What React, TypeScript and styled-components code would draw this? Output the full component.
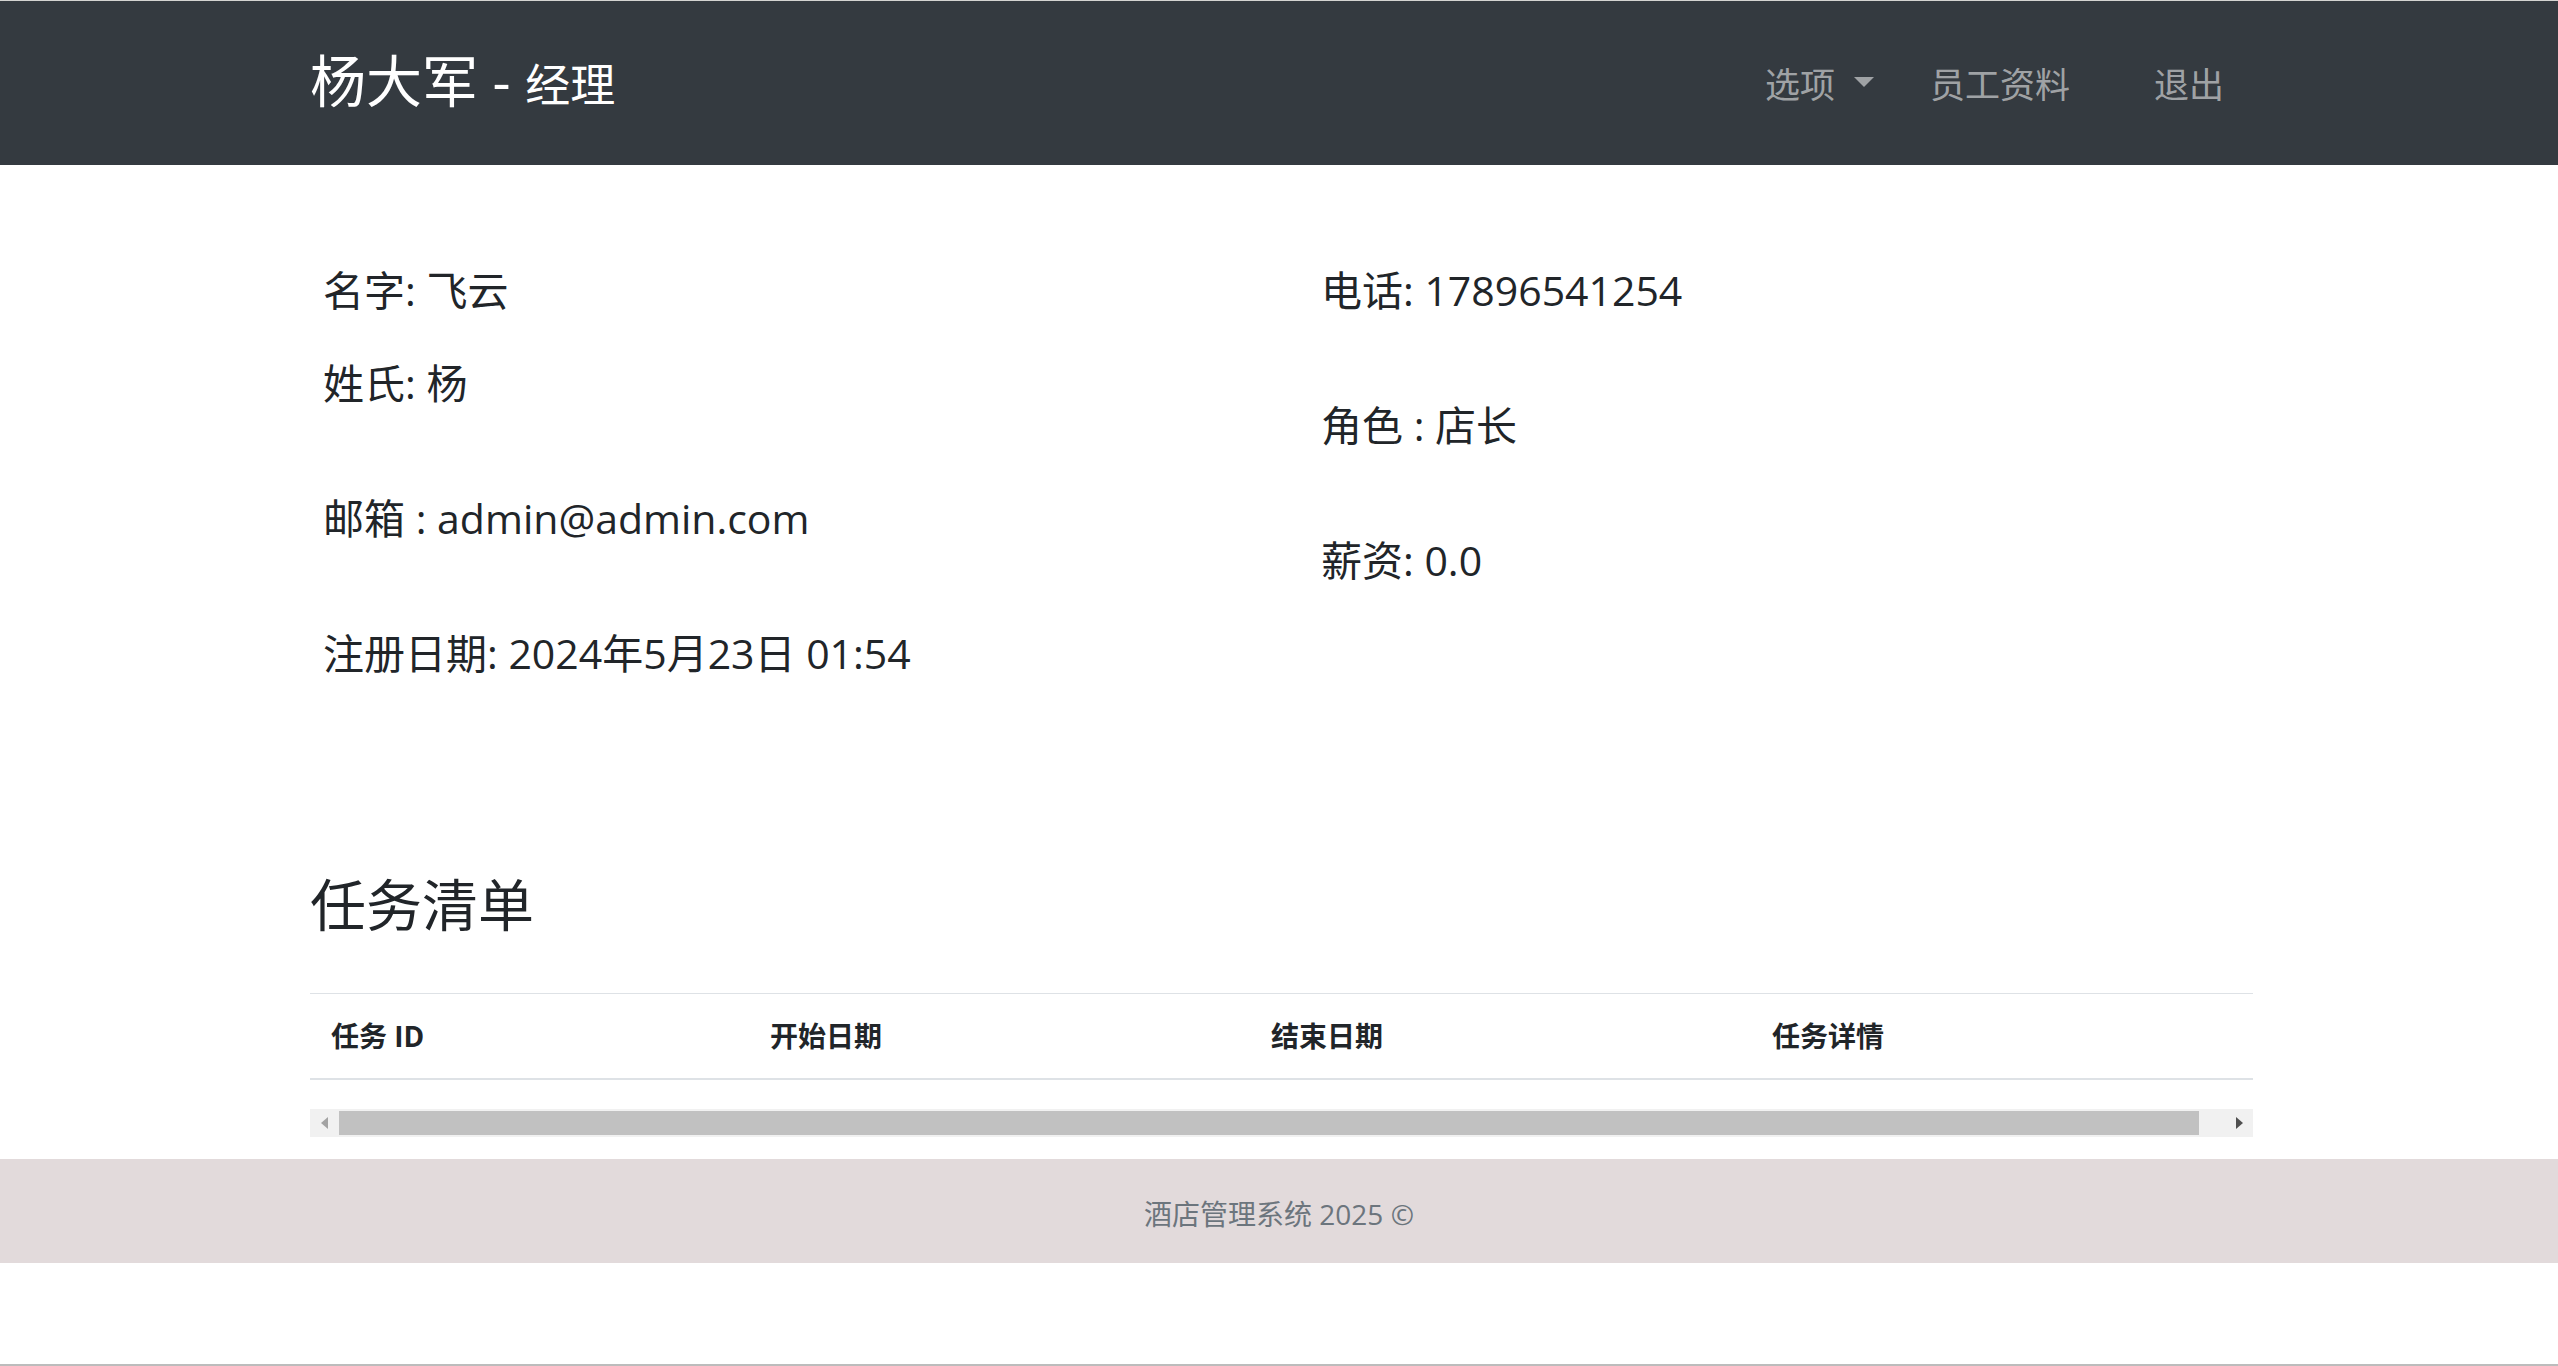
import React from "react";
import styled, { createGlobalStyle } from "styled-components";

const GlobalStyle = createGlobalStyle`
  html, body {
    margin: 0;
    padding: 0;
    background: #ffffff;
  }
  body {
    font-family: "Open Sans", "Noto Sans CJK SC", "Noto Sans", sans-serif;
    color: #212529;
  }
  * { box-sizing: border-box; }
`;

const Page = styled.div`
  display: flex;
  flex-direction: column;
  height: 1366px;
  border-bottom: 2px solid #bcbcbc;
  overflow: hidden;
`;

const Navbar = styled.nav`
  height: 165px;
  background: #343a40;
  border-top: 1px solid #d4d4d2;
  flex-shrink: 0;
`;

const NavInner = styled.div`
  width: 1943px;
  margin-left: 310px;
  height: 100%;
  display: flex;
  align-items: center;
  justify-content: space-between;
`;

const Brand = styled.a`
  display: flex;
  align-items: baseline;
  color: #ffffff;
  text-decoration: none;
  font-size: 56px;
  line-height: 1.2;
  margin-top: -4px;
  white-space: pre;
`;

const BrandSub = styled.span`
  font-size: 45px;
`;

const NavList = styled.ul`
  display: flex;
  align-items: center;
  list-style: none;
  margin: 0;
  padding: 0 29px 0 0;
  margin-top: 4px;
`;

const NavItem = styled.li<{ $ml?: number }>`
  margin-left: ${(p) => p.$ml ?? 0}px;
`;

const NavLink = styled.a`
  display: flex;
  align-items: center;
  color: rgba(255, 255, 255, 0.55);
  font-size: 35px;
  line-height: 1.5;
  text-decoration: none;
`;

const Caret = styled.span`
  display: inline-block;
  margin-left: 19px;
  width: 0;
  height: 0;
  border-left: 10px solid transparent;
  border-right: 10px solid transparent;
  border-top: 10px solid #9fa2a5;
  margin-top: -6px;
`;

const Main = styled.main`
  width: 1943px;
  margin-left: 310px;
  flex-shrink: 0;
`;

const InfoGrid = styled.section`
  display: grid;
  grid-template-columns: 998px 1fr;
  padding: 101px 0 0 13px;
`;

const InfoColumn = styled.div<{ $gap: number }>`
  display: flex;
  flex-direction: column;
  gap: ${(p) => p.$gap}px;
`;

const Field = styled.div`
  font-size: 41px;
  line-height: 48px;
  height: 48px;
  white-space: nowrap;
`;

const Heading = styled.h2`
  margin: 194px 0 0 0;
  font-size: 56px;
  font-weight: 400;
  line-height: 67px;
`;

const TableWrap = styled.div`
  margin-top: 55px;
`;

const Table = styled.table`
  width: 1943px;
  border-collapse: collapse;
  table-layout: fixed;
`;

const Th = styled.th<{ $w: number }>`
  width: ${(p) => p.$w}px;
  text-align: left;
  font-size: 28px;
  font-weight: 700;
  line-height: 42px;
  padding: 21px 21px;
  border-top: 1px solid #dee2e6;
  border-bottom: 2px solid #dee2e6;
`;

const ScrollTrack = styled.div`
  margin-top: 29px;
  height: 28px;
  width: 1943px;
  background: #f1f1f1;
  display: flex;
  align-items: stretch;
`;

const ScrollButton = styled.div<{ $w: number }>`
  width: ${(p) => p.$w}px;
  flex-shrink: 0;
  display: flex;
  align-items: center;
  justify-content: center;
`;

const ArrowLeft = styled.span`
  width: 0;
  height: 0;
  border-top: 6px solid transparent;
  border-bottom: 6px solid transparent;
  border-right: 7px solid #a3a3a3;
`;

const ArrowRight = styled.span`
  width: 0;
  height: 0;
  border-top: 6px solid transparent;
  border-bottom: 6px solid transparent;
  border-left: 7px solid #505050;
`;

const Thumb = styled.div`
  width: 1860px;
  margin: 2px 0;
  background: #c1c1c1;
`;

const Spacer = styled.div`
  flex: 1;
`;

const Footer = styled.footer`
  margin-top: 22px;
  height: 104px;
  background: #e2dadb;
  display: flex;
  align-items: center;
  justify-content: center;
  flex-shrink: 0;
`;

const FooterText = styled.span`
  font-size: 28px;
  color: #6c757d;
  margin-top: 4px;
`;

export default function App() {
  return (
    <>
      <GlobalStyle />
      <Page>
        <Navbar>
          <NavInner>
            <Brand href="#">
              {"杨大军 - "}
              <BrandSub>经理</BrandSub>
            </Brand>
            <NavList>
              <NavItem>
                <NavLink href="#">
                  选项
                  <Caret />
                </NavLink>
              </NavItem>
              <NavItem $ml={56}>
                <NavLink href="#">员工资料</NavLink>
              </NavItem>
              <NavItem $ml={84}>
                <NavLink href="#">退出</NavLink>
              </NavItem>
            </NavList>
          </NavInner>
        </Navbar>
        <Main>
          <InfoGrid>
            <InfoColumn $gap={87}>
              <InfoColumn $gap={45}>
                <Field>名字: 飞云</Field>
                <Field>姓氏: 杨</Field>
              </InfoColumn>
              <Field>邮箱 : admin@admin.com</Field>
              <Field>注册日期: 2024年5月23日 01:54</Field>
            </InfoColumn>
            <InfoColumn $gap={87}>
              <Field>电话: 17896541254</Field>
              <Field>角色 : 店长</Field>
              <Field>薪资: 0.0</Field>
            </InfoColumn>
          </InfoGrid>
          <Heading>任务清单</Heading>
          <TableWrap>
            <Table>
              <thead>
                <tr>
                  <Th $w={439}>任务 ID</Th>
                  <Th $w={501}>开始日期</Th>
                  <Th $w={501}>结束日期</Th>
                  <Th $w={502}>任务详情</Th>
                </tr>
              </thead>
              <tbody></tbody>
            </Table>
            <ScrollTrack>
              <ScrollButton $w={29}>
                <ArrowLeft />
              </ScrollButton>
              <Thumb />
              <Spacer />
              <ScrollButton $w={28}>
                <ArrowRight />
              </ScrollButton>
            </ScrollTrack>
          </TableWrap>
        </Main>
        <Footer>
          <FooterText>酒店管理系统 2025 ©</FooterText>
        </Footer>
      </Page>
    </>
  );
}
